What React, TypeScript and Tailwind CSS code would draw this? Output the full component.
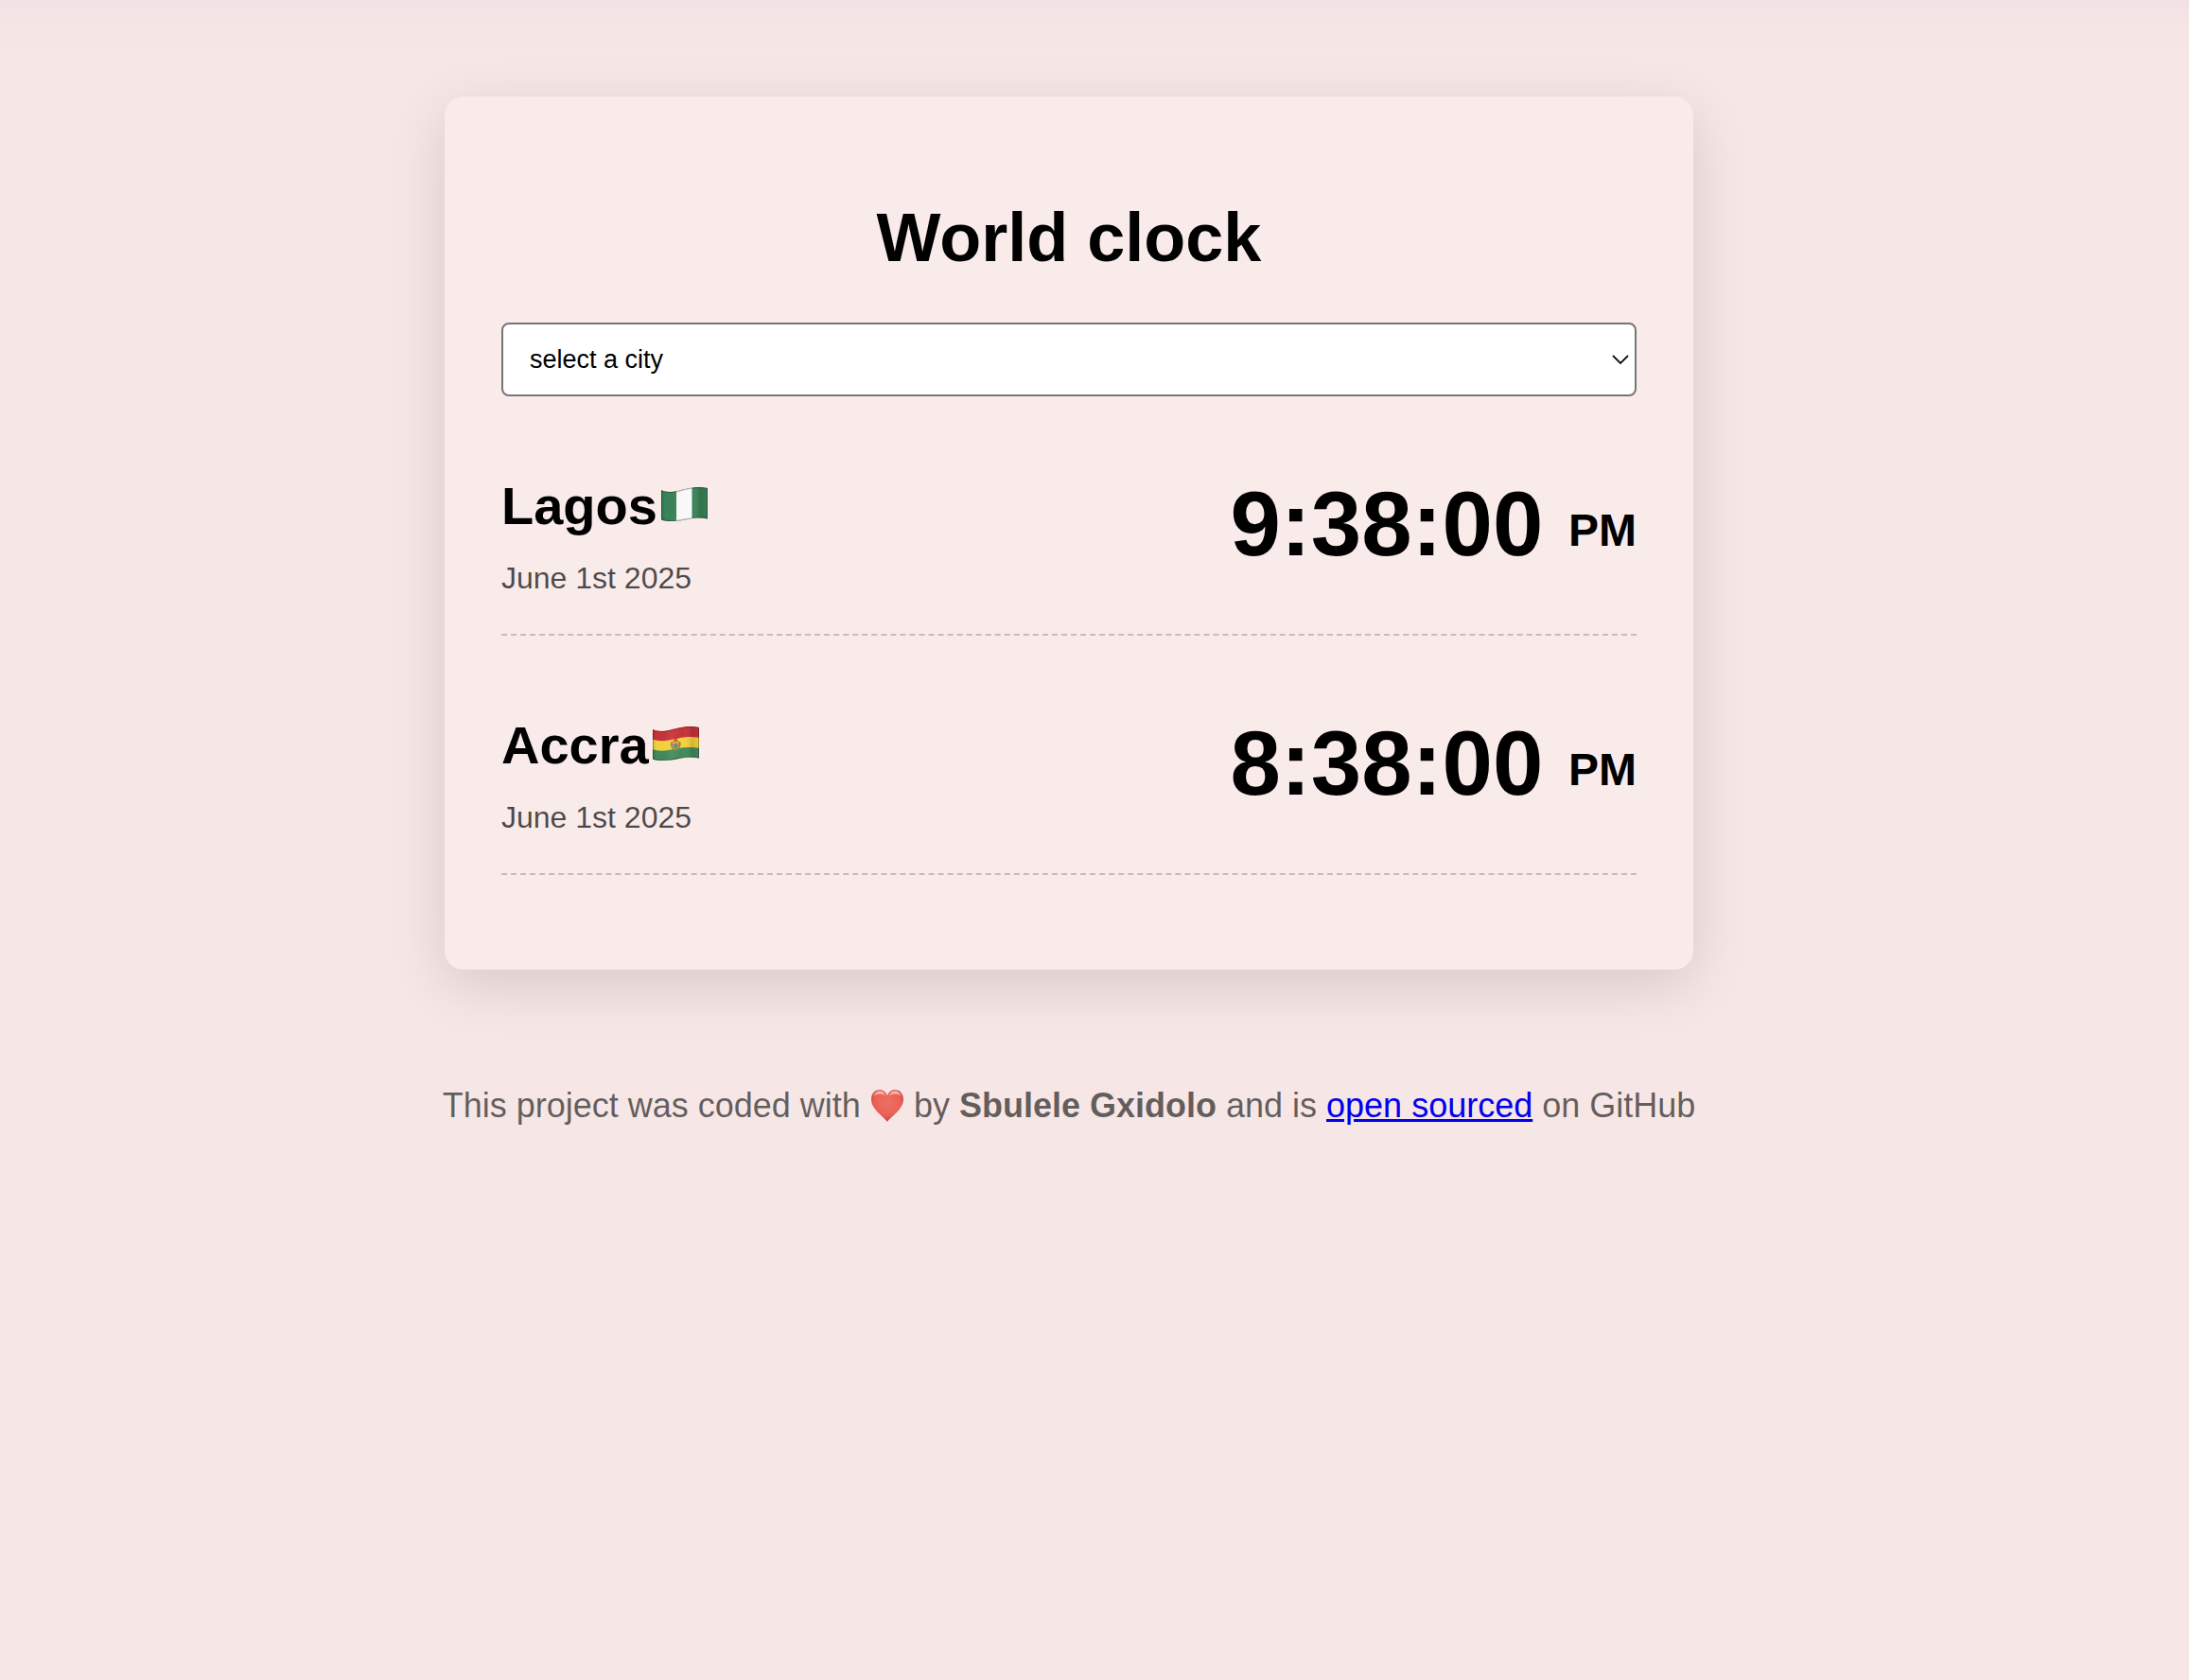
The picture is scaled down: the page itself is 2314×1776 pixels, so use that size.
import React from "react";

const FLAG_OUTLINE = "M1 4C6 6.500 12 6.300 18 5C26 3 38 -1 50 2V34.500C38 32 30 35 22 36.300C14 37.500 6 37.500 1 35.500Z";

function FlagShading({ id }: { id: string }) {
  return (
    <>
      <defs>
        <linearGradient id={`${id}-fold`} x1="0" x2="1" y1="0" y2="0">
          <stop offset="0" stopColor="#000" stopOpacity="0.12" />
          <stop offset="0.1" stopColor="#000" stopOpacity="0" />
          <stop offset="0.4" stopColor="#fff" stopOpacity="0.06" />
          <stop offset="0.65" stopColor="#fff" stopOpacity="0" />
          <stop offset="0.85" stopColor="#000" stopOpacity="0.14" />
          <stop offset="1" stopColor="#000" stopOpacity="0.04" />
        </linearGradient>
        <clipPath id={`${id}-clip`}>
          <path d={FLAG_OUTLINE} />
        </clipPath>
      </defs>
      <path d={FLAG_OUTLINE} fill={`url(#${id}-fold)`} />
      <path d={FLAG_OUTLINE} fill="none" stroke="#000" strokeOpacity="0.3" strokeWidth="2" clipPath={`url(#${id}-clip)`} />
    </>
  );
}

function NigeriaFlag() {
  return (
    <svg viewBox="0 0 51 38" className="mb-1 ml-[3px] h-[38px] w-[51px]" role="img" aria-label="Flag of Nigeria">
      <g clipPath="url(#nigeria-clip)">
        <path d="M0 0H51V38H0Z" fill="#398359" />
        <path d="M17 0H33.500V38H17Z" fill="#f8f8f8" />
      </g>
      <FlagShading id="nigeria" />
    </svg>
  );
}

function BoliviaFlag() {
  return (
    <svg viewBox="0 0 51 38" className="mb-1 ml-[3px] h-[38px] w-[51px]" role="img" aria-label="Flag of Bolivia">
      <g clipPath="url(#bolivia-clip)">
        <path d="M0 0H51V38H0Z" fill="#f5d23c" />
        <path d="M0 0H51V13C38 10 26 14 18 15.500C12 16.500 6 16.500 0 14.500Z" fill="#c8323a" />
        <path d="M0 25C6 27 12 27 18 26C26 24.500 38 21.500 51 24V38H0Z" fill="#428a5c" />
      </g>
      <path d="M21 17C19.500 21 21 24.500 25 25.500C29 24.500 31 21 29.500 17" fill="none" stroke="#8c9a3c" strokeWidth="1.500" />
      <circle cx="25.200" cy="20" r="3.800" fill="#eeb34a" stroke="#d0563a" strokeWidth="1.200" />
      <path d="M22.500 20.500L25.200 18L28 20.500L26.500 23H24Z" fill="#3f9a84" />
      <path d="M23 15L25.200 13.800L27.500 15L25.200 16.500Z" fill="#a0522d" />
      <FlagShading id="bolivia" />
    </svg>
  );
}

function Heart() {
  return (
    <svg viewBox="0 0 36 36" className="inline-block size-9 align-[-6px]" role="img" aria-label="love">
      <defs>
        <radialGradient id="heart-fill" cx="0.5" cy="0.4" r="0.62">
          <stop offset="0" stopColor="#ee6f63" />
          <stop offset="0.65" stopColor="#ea6156" />
          <stop offset="1" stopColor="#b83f38" />
        </radialGradient>
        <linearGradient id="heart-shine" x1="0" x2="0" y1="0" y2="1">
          <stop offset="0" stopColor="#fff" stopOpacity="0.7" />
          <stop offset="1" stopColor="#fff" stopOpacity="0" />
        </linearGradient>
      </defs>
      <path d="M18 35C14 29 1 22 1 11C1 5 5 1 10 1C14 1 16.500 3.500 18 7C19.500 3.500 22 1 26 1C31 1 35 5 35 11C35 22 22 29 18 35Z" fill="url(#heart-fill)" />
      <path d="M3 9C3.500 5 6 2.500 10 2.500C13 2.500 15.500 4.500 16.500 8C12 5 7 5 3 9Z" fill="url(#heart-shine)" />
      <path d="M19.500 8C20.500 4.500 23 2.500 26 2.500C30 2.500 32.500 5 33 9C29 5 24 5 19.500 8Z" fill="url(#heart-shine)" />
    </svg>
  );
}

const cities = [
  { name: "Lagos", Flag: NigeriaFlag, date: "June 1st 2025", time: "9:38:00", period: "PM" },
  { name: "Accra", Flag: BoliviaFlag, date: "June 1st 2025", time: "8:38:00", period: "PM" },
];

export default function App() {
  return (
    <div className="min-h-screen bg-[#f6e6e5] bg-[linear-gradient(to_bottom,#f1e1e4,#f4e4e4_18px,#f6e6e5_60px)] pt-[102px] pr-[54px] font-['Liberation_Sans',Arial,sans-serif] text-black">
      <main className="mx-auto w-full max-w-[1320px] rounded-[20px] bg-[#f9ebea] px-[60px] pt-[101px] pb-[100px] shadow-[0_16px_60px_rgba(0,0,0,0.12)]">
        <h1 className="text-center text-[72px] leading-[96px] font-bold">World clock</h1>
        <div className="relative mt-[42px]">
          <select
            aria-label="City"
            className="block h-[78px] w-full appearance-none rounded-lg border-2 border-[#767676] bg-white px-7 text-[27px]"
          >
            <option>select a city</option>
            <option>Lagos</option>
            <option>Accra</option>
          </select>
          <svg viewBox="0 0 18 10" className="pointer-events-none absolute top-[34px] right-2 h-[10px] w-[18px]" aria-hidden="true">
            <path d="M1 1L9 9L17 1" fill="none" stroke="#111" strokeWidth="1.800" />
          </svg>
        </div>
        {cities.map(({ name, Flag, date, time, period }) => (
          <section
            key={name}
            className="mt-20 flex items-start justify-between border-b-2 border-dashed border-black/20 pb-[35px]"
          >
            <div>
              <h2 className="flex items-center text-[56px] leading-[72px] font-bold">
                {name}
                <Flag />
              </h2>
              <p className="mt-4 text-[32px] leading-[48px] text-black/70">{date}</p>
            </div>
            <p className="text-[96px] leading-[110px] font-bold">
              {time} <small className="align-[10px] text-[48px] leading-none">{period}</small>
            </p>
          </section>
        ))}
      </main>
      <footer className="mt-[120px] text-center text-[36px] leading-[48px] text-black/60">
        This project was coded with <Heart /> by <strong>Sbulele Gxidolo</strong> and is{" "}
        <a href="#source" className="text-[#0000ee] underline">
          open sourced
        </a>{" "}
        on GitHub
      </footer>
    </div>
  );
}
